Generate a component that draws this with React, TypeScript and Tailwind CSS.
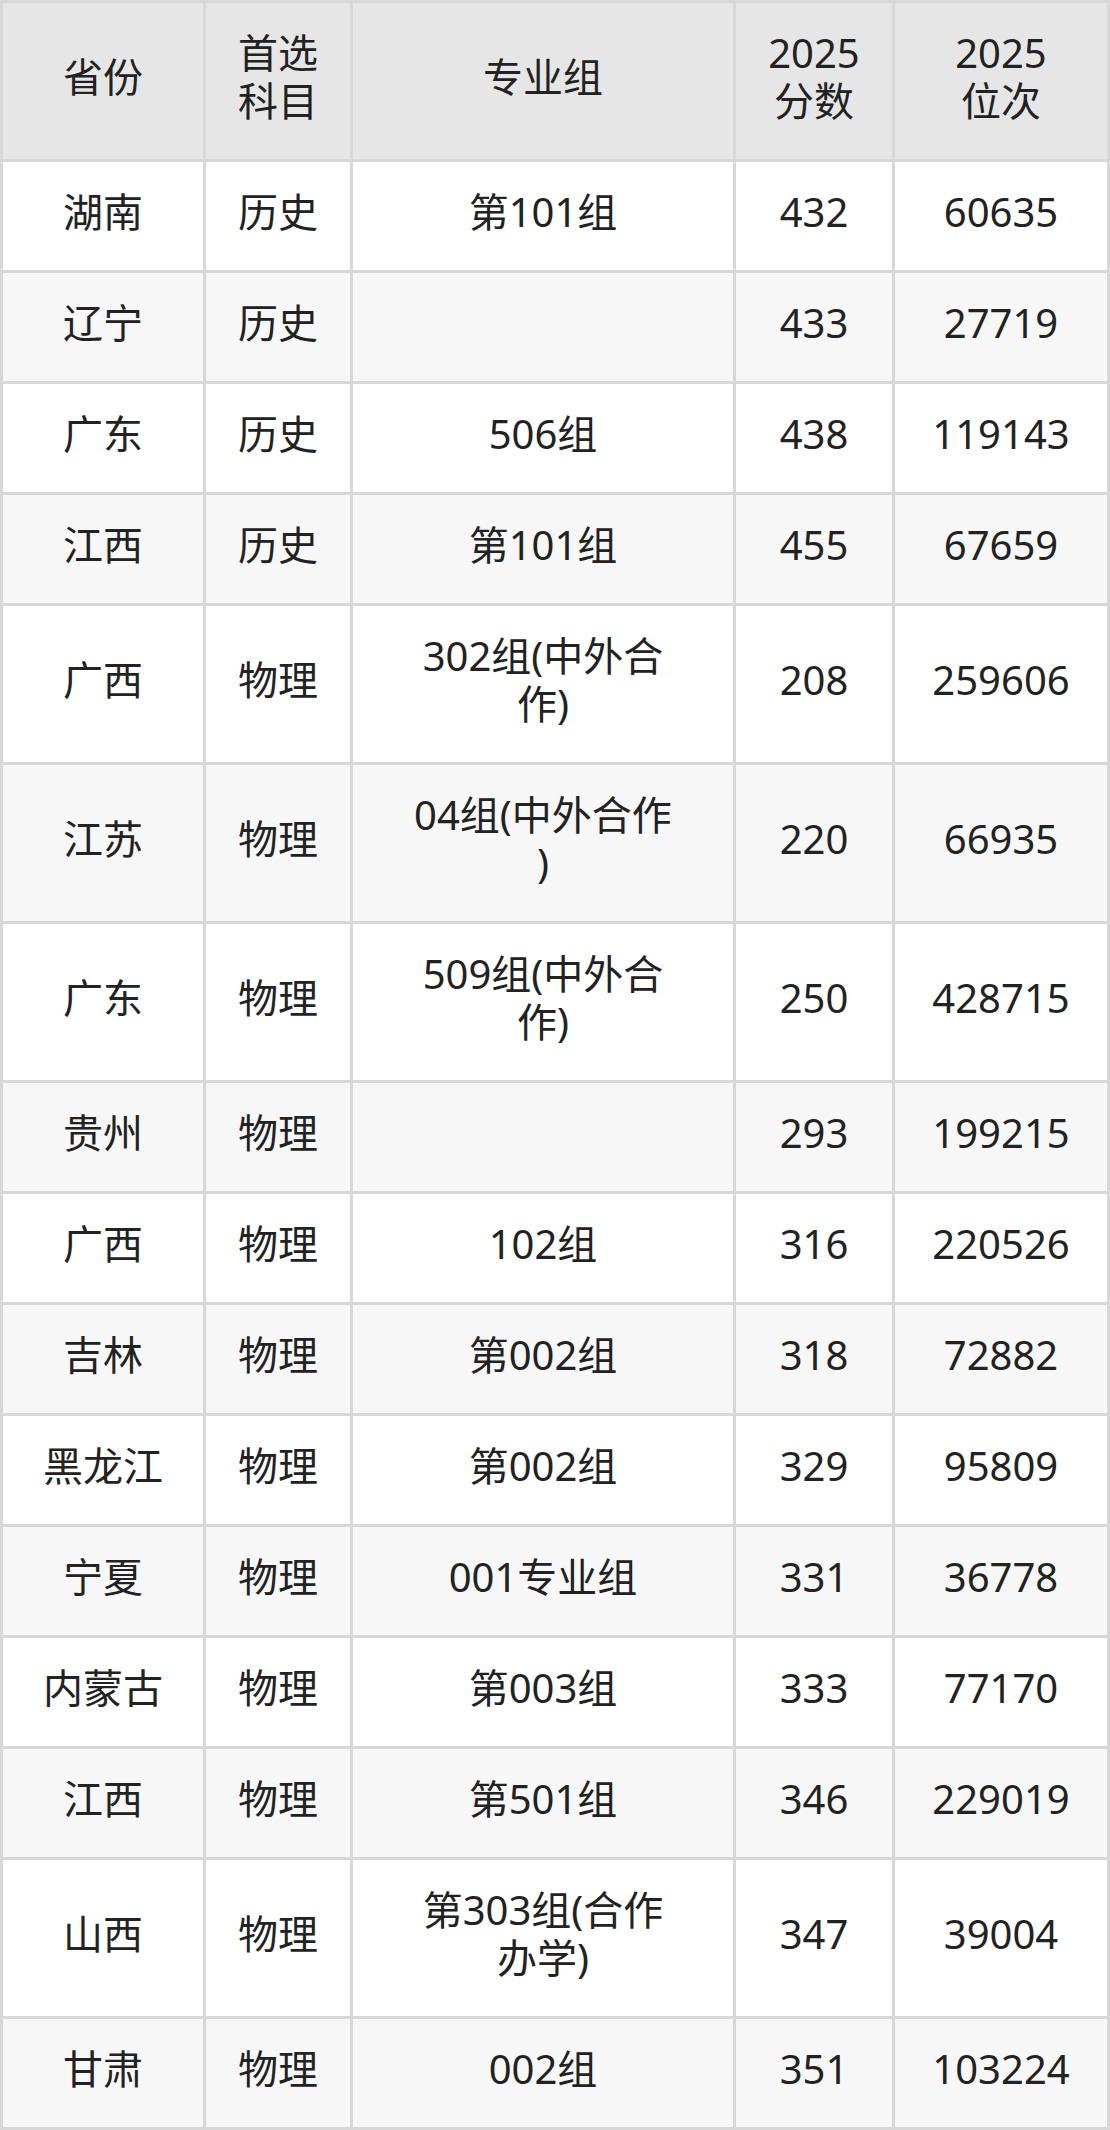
import React from "react";

type Row = [string, string, string[], string, string];

const rows: Row[] = [
  ["湖南", "历史", ["第101组"], "432", "60635"],
  ["辽宁", "历史", [], "433", "27719"],
  ["广东", "历史", ["506组"], "438", "119143"],
  ["江西", "历史", ["第101组"], "455", "67659"],
  ["广西", "物理", ["302组(中外合", "作)"], "208", "259606"],
  ["江苏", "物理", ["04组(中外合作", ")"], "220", "66935"],
  ["广东", "物理", ["509组(中外合", "作)"], "250", "428715"],
  ["贵州", "物理", [], "293", "199215"],
  ["广西", "物理", ["102组"], "316", "220526"],
  ["吉林", "物理", ["第002组"], "318", "72882"],
  ["黑龙江", "物理", ["第002组"], "329", "95809"],
  ["宁夏", "物理", ["001专业组"], "331", "36778"],
  ["内蒙古", "物理", ["第003组"], "333", "77170"],
  ["江西", "物理", ["第501组"], "346", "229019"],
  ["山西", "物理", ["第303组(合作", "办学)"], "347", "39004"],
  ["甘肃", "物理", ["002组"], "351", "103224"],
];

const cellBase =
  "flex flex-col items-center justify-center text-center pt-[26px] pb-[34px] leading-[48px] px-2";

export default function App() {
  return (
    <div
      className="w-[1110px] bg-white text-[40px] text-[#222222]"
      style={{ fontFamily: '"Noto Sans", "Noto Sans CJK SC", sans-serif' }}
    >
      <div className="grid grid-cols-[200px_144px_380px_156px_212px] gap-[3px] bg-[#d8d8d8] p-[3px]">
        <div className={`${cellBase} bg-[#e6e6e6]`}>
          <span>省份</span>
        </div>
        <div className={`${cellBase} bg-[#e6e6e6]`}>
          <span>首选</span>
          <span>科目</span>
        </div>
        <div className={`${cellBase} bg-[#e6e6e6]`}>
          <span>专业组</span>
        </div>
        <div className={`${cellBase} bg-[#e6e6e6]`}>
          <span>2025</span>
          <span>分数</span>
        </div>
        <div className={`${cellBase} bg-[#e6e6e6]`}>
          <span>2025</span>
          <span>位次</span>
        </div>
        {rows.map((r, i) => {
          const bg = i % 2 === 0 ? "bg-white" : "bg-[#f7f7f7]";
          return (
            <React.Fragment key={i}>
              <div className={`${cellBase} ${bg}`}>
                <span>{r[0]}</span>
              </div>
              <div className={`${cellBase} ${bg}`}>
                <span>{r[1]}</span>
              </div>
              <div className={`${cellBase} ${bg}`}>
                {r[2].length === 0 ? (
                  <span className="block h-[48px]" />
                ) : (
                  r[2].map((line, j) => (
                    <span key={j} className="whitespace-nowrap">
                      {line}
                    </span>
                  ))
                )}
              </div>
              <div className={`${cellBase} ${bg}`}>
                <span>{r[3]}</span>
              </div>
              <div className={`${cellBase} ${bg}`}>
                <span>{r[4]}</span>
              </div>
            </React.Fragment>
          );
        })}
      </div>
    </div>
  );
}
